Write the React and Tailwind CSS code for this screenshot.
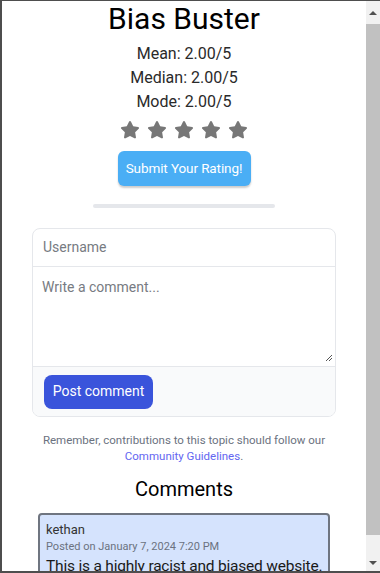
import React from "react";

const font = { fontFamily: "Roboto, 'Liberation Sans', sans-serif" };

function Star() {
  return (
    <svg width="22" height="22" viewBox="0 0 24 24" className="fill-[#777777]">
      <path d="M12 2.2c.5 0 .9.3 1.1.7l2.4 5 5.4.8c.9.1 1.3 1.3.6 1.9l-3.9 3.9.9 5.4c.2.9-.8 1.6-1.6 1.2L12 18.5l-4.9 2.6c-.8.4-1.8-.3-1.6-1.2l.9-5.4-3.9-3.9c-.7-.6-.3-1.8.6-1.9l5.4-.8 2.4-5c.2-.4.6-.7 1.1-.7z" />
    </svg>
  );
}

function Scrollbar() {
  return (
    <div className="w-[14px] shrink-0 flex flex-col bg-[#f1f1f1]">
      <div className="h-[23px] shrink-0 flex items-center justify-center">
        <div className="w-0 h-0 border-l-[4px] border-r-[4px] border-b-[4px] border-l-transparent border-r-transparent border-b-[#505050]" />
      </div>
      <div className="h-[511px] shrink-0 bg-[#c1c1c1]" />
      <div className="flex-1 flex items-end justify-center pb-[6px]">
        <div className="w-0 h-0 border-l-[4px] border-r-[4px] border-t-[4px] border-l-transparent border-r-transparent border-t-[#505050]" />
      </div>
    </div>
  );
}

export default function App() {
  return (
    <div
      className="w-[380px] h-[573px] overflow-hidden flex border-t border-l-2 border-b-2 border-[#4e4e4e] bg-white"
      style={font}
    >
      <div className="flex-1 overflow-hidden bg-white flex flex-col items-center text-[#1a1a1a] *:shrink-0">
        {/* HEADER */}
        <h1 className="text-[30px] leading-[36px] font-normal text-black">Bias Buster</h1>
        <div className="mt-[5px] flex flex-col items-center text-[16px] leading-[24px] text-[#2a2a2a]">
          <p>Mean: 2.00/5</p>
          <p>Median: 2.00/5</p>
          <p>Mode: 2.00/5</p>
        </div>

        {/* STARS */}
        <div className="mt-[5px] flex gap-[5px]">
          <Star />
          <Star />
          <Star />
          <Star />
          <Star />
        </div>

        <button className="mt-[10px] w-[133px] h-[35px] rounded-[6px] bg-[#4aaef5] text-white text-[13.5px] tracking-[-0.1px] shadow-[0_2px_2px_rgba(0,0,0,0.2)]">
          Submit Your Rating!
        </button>

        <div className="mt-[18px] w-[182px] h-[4px] rounded-full bg-[#e5e7eb]" />

        {/* FORM */}
        <div className="mt-[20px] w-[304px] rounded-[8px] border border-[#e5e7eb] overflow-hidden">
          <div className="h-[38px] flex items-center px-[10px] border-b border-[#e5e7eb] text-[14px] text-[#777b82]">
            Username
          </div>
          <div className="relative h-[99px] px-[9px] pt-[10px] text-[14px] text-[#777b82]">
            Write a comment...
            <svg width="8" height="8" viewBox="0 0 8 8" className="absolute right-[2px] bottom-[4px] stroke-[#555]">
              <line x1="1" y1="7" x2="7" y2="1" strokeWidth="1" />
              <line x1="4" y1="7" x2="7" y2="4" strokeWidth="1" />
            </svg>
          </div>
          <div className="h-[50px] bg-[#f9fafb] border-t border-[#e5e7eb] px-[11px] flex items-center">
            <button className="w-[109px] h-[34px] rounded-[8px] bg-[#3a54db] text-white text-[14px]">
              Post comment
            </button>
          </div>
        </div>

        <p className="mt-[15px] text-center text-[11.5px] leading-[16px] text-[#6b7280]">
          Remember, contributions to this topic should follow our
          <br />
          <span className="text-[#6366f1]">Community Guidelines</span>.
        </p>

        <h2 className="mt-[11px] text-[20px] leading-[28px] text-black">Comments</h2>

        {/* COMMENT */}
        <div className="mt-[10px] w-[292px] rounded-[4px] border-2 border-[#6f7580] bg-[#d5e3fd] px-[6px] pt-[6px] pb-2">
          <p className="text-[13px] leading-[18px] text-[#333]">kethan</p>
          <p className="text-[11px] leading-[16px] text-[#6b7280]">Posted on January 7, 2024 7:20 PM</p>
          <p className="text-[15.5px] leading-[22px] tracking-[-0.2px] whitespace-nowrap text-[#1a1a1a]">
            This is a highly racist and biased website.
          </p>
        </div>
      </div>
      <Scrollbar />
    </div>
  );
}
